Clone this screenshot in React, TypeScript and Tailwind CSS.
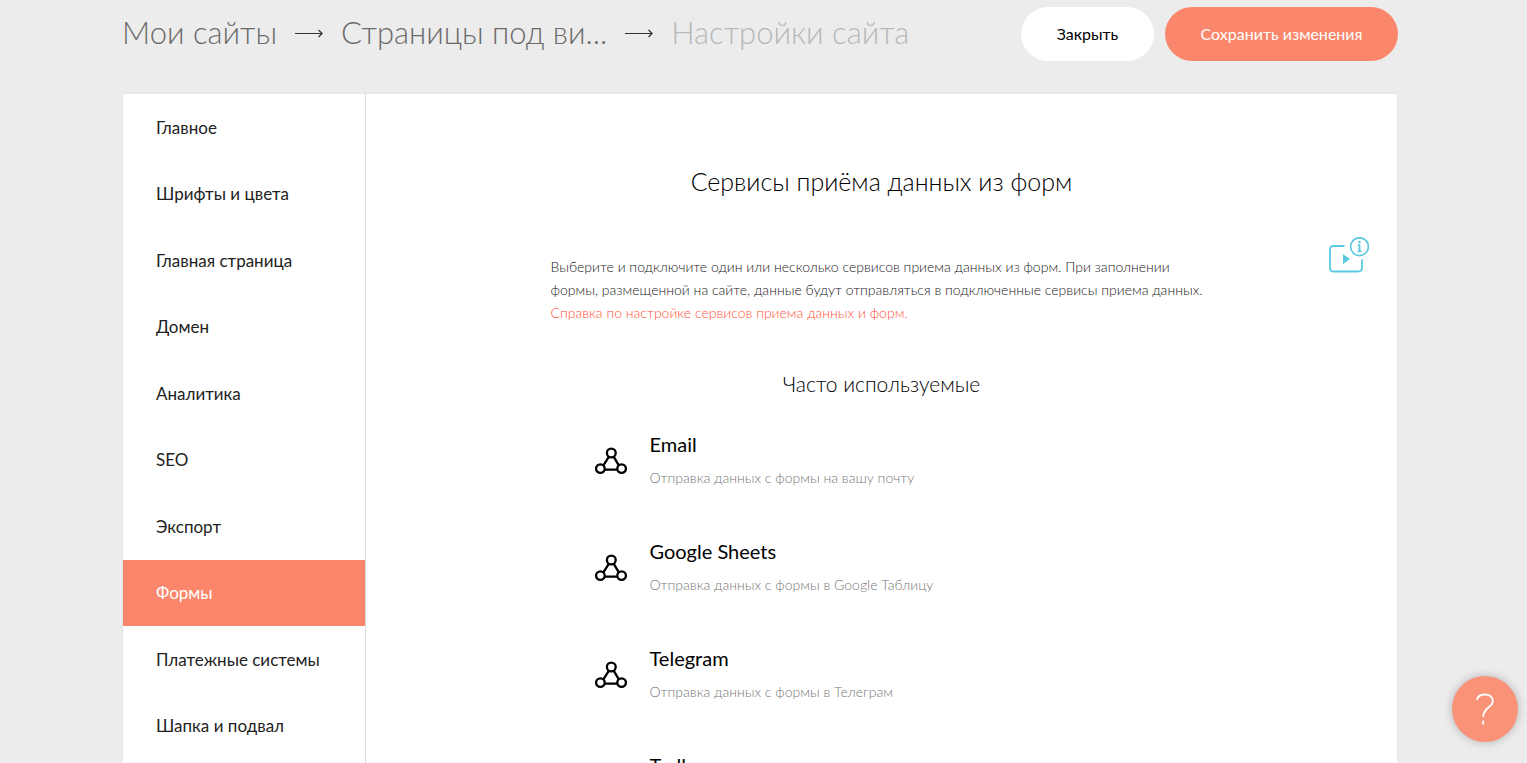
const navItems = [
  'Главное',
  'Шрифты и цвета',
  'Главная страница',
  'Домен',
  'Аналитика',
  'SEO',
  'Экспорт',
  'Формы',
  'Платежные системы',
  'Шапка и подвал',
];

const services = [
  { name: 'Email', text: 'Отправка данных с формы на вашу почту' },
  { name: 'Google Sheets', text: 'Отправка данных с формы в Google Таблицу' },
  { name: 'Telegram', text: 'Отправка данных с формы в Телеграм' },
  { name: 'Trello' },
];

function Arrow() {
  return (
    <svg className="h-3 w-7 shrink-0" viewBox="0 0 28 12" fill="none" stroke="#333" aria-hidden="true">
      <path d="M0 5.5H27" strokeWidth="1" />
      <path d="M23.5 2L27.2 5.5L23.5 9" strokeWidth="1.2" />
    </svg>
  );
}

function WebhookIcon() {
  return (
    <svg className="h-7 w-8 shrink-0" viewBox="0 0 32 28" fill="none" stroke="#000" strokeWidth="2.3" aria-hidden="true">
      <circle cx="16.3" cy="6" r="4.4" />
      <circle cx="5.4" cy="21.6" r="4.3" />
      <circle cx="26.6" cy="21.6" r="4.3" />
      <path d="M13.8 9.8L8.4 18.4M18.8 9.8L23.8 18.4M9.8 22.6H22.2" />
    </svg>
  );
}

function VideoInfoIcon() {
  return (
    <svg className="h-9 w-10" viewBox="0 0 40 36" fill="none" stroke="#5bc8e0" aria-hidden="true">
      <path d="M15.5 9H4.5Q1 9 1 12.5V31Q1 34.5 4.5 34.5H29Q33 34.5 33 31V22.5" strokeWidth="1.8" />
      <circle cx="30.5" cy="9.7" r="8.9" strokeWidth="1.7" />
      <path d="M30.5 7.5V14.8M29 8H30.5M28.5 14.3H32.5" strokeWidth="1.8" />
      <circle cx="30.5" cy="5" r="1.3" fill="#5bc8e0" stroke="none" />
      <path d="M14 17L21 22L14 27Z" fill="#5bc8e0" stroke="none" />
    </svg>
  );
}

export default function App() {
  return (
    <div className="h-screen overflow-hidden bg-[#ececec] pr-[7px] font-['Lato','Open_Sans',sans-serif] text-black">
      <div className="mx-auto max-w-[1276px]">
        <header className="flex items-center justify-between pt-[7px] pb-8">
          <nav aria-label="Путь" className="flex items-center gap-[18px] whitespace-nowrap text-[31px] leading-[50px] font-light text-[#6a6a6a]">
            <a href="#sites" className="pb-1">Мои сайты</a>
            <Arrow />
            <a href="#pages" className="pb-1">Страницы под ви...</a>
            <Arrow />
            <span className="pb-1 text-[#b8b8b8]">Настройки сайта</span>
          </nav>
          <div className="flex gap-[11px] text-base">
            <button type="button" className="h-[54px] w-[133px] rounded-full bg-white">Закрыть</button>
            <button type="button" className="h-[54px] w-[233px] rounded-full bg-[#fa876b] text-white">
              Сохранить изменения
            </button>
          </div>
        </header>

        <div className="flex border border-[#e4e4e4] bg-white">
          <nav aria-label="Настройки" className="w-[243px] shrink-0 border-r border-[#dadada]">
            <ul className="grid h-[665px] auto-rows-fr text-[17px]">
              {navItems.map((item) => (
                <li key={item} className="flex">
                  <a
                    href="#settings"
                    aria-current={item === 'Формы' ? 'page' : undefined}
                    className={
                      item === 'Формы'
                        ? 'flex flex-1 items-center bg-[#fb866c] px-[33px] text-white'
                        : 'flex flex-1 items-center px-[33px] text-[#222]'
                    }
                  >
                    {item}
                  </a>
                </li>
              ))}
            </ul>
          </nav>

          <main className="relative flex flex-1 flex-col items-center pt-[67px]">
            <h1 className="text-[25px] leading-10 font-light">Сервисы приёма данных из форм</h1>
            <button type="button" aria-label="Видеоинструкция" className="absolute top-[143px] right-7">
              <VideoInfoIcon />
            </button>
            <p className="mt-[54px] w-[662px] text-sm leading-[23px] font-light whitespace-nowrap text-[#222]">
              Выберите и подключите один или несколько сервисов приема данных из форм. При заполнении
              <br />
              формы, размещенной на сайте, данные будут отправляться в подключенные сервисы приема данных.
              <br />
              <a href="#help" className="text-[#ff5238]">Справка по настройке сервисов приема данных и форм.</a>
            </p>
            <h2 className="mt-11 text-[21px] leading-8 font-light">Часто используемые</h2>
            <ul className="mt-7 w-[574px]">
              {services.map((service) => (
                <li key={service.name} className="flex h-[107px] gap-[23px]">
                  <div className="pt-[19px]">
                    <WebhookIcon />
                  </div>
                  <div>
                    <h3 className="text-xl leading-8">{service.name}</h3>
                    {service.text && (
                      <p className="mt-1.5 text-sm leading-6 font-light text-[#777]">{service.text}</p>
                    )}
                  </div>
                </li>
              ))}
            </ul>
          </main>
        </div>
      </div>

      <button
        type="button"
        aria-label="Помощь"
        className="fixed right-[9px] bottom-[21px] flex size-[66px] items-center justify-center rounded-full bg-[#f99277] shadow-[0_0_10px_rgba(0,0,0,0.25)]"
      >
        <svg className="h-8 w-5" viewBox="0 0 20 32" fill="none" stroke="#fff" strokeWidth="1.8" aria-hidden="true">
          <path d="M2 7C2.5 3.5 5.5 1.5 10 1.5C14.5 1.5 17.8 4 17.8 8C17.8 14.5 8.2 14.5 8.2 24" />
          <path d="M8.2 27.5V31.5" />
        </svg>
      </button>
    </div>
  );
}
